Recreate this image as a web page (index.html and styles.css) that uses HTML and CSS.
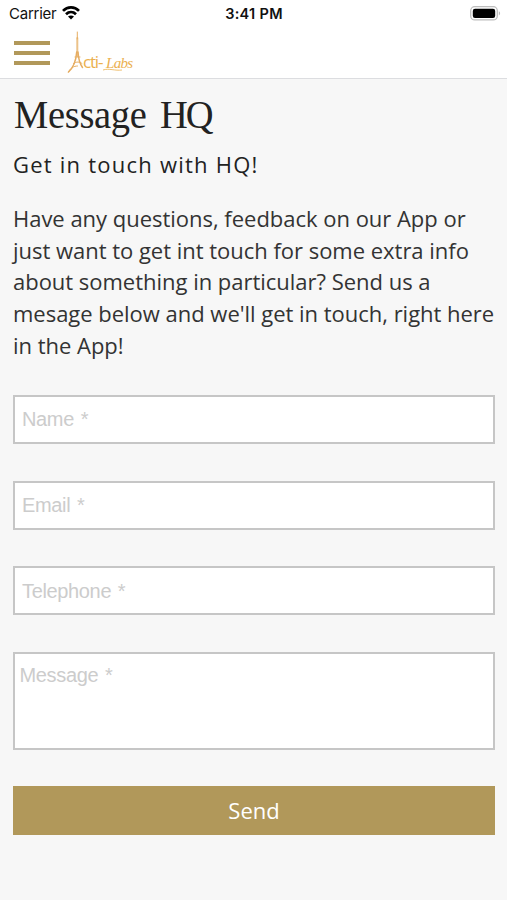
FILE: index.html
```html
<!DOCTYPE html>
<html lang="en">
<head>
<meta charset="utf-8">
<title>Message HQ</title>
<link rel="stylesheet" href="styles.css">
</head>
<body>
<header class="top">
  <div class="status">
    <div class="carrier">Carrier
      <svg class="wifi" width="18" height="14" viewBox="0 0 18 14" fill="none" stroke="#000" stroke-width="2.7">
        <path d="M1 4.9C5.5.3 12.5.3 17 4.9"/>
        <path d="M4 8.2c2.9-2.8 7.1-2.8 10 0"/>
        <path d="M9 13.6 6 10.5c1.7-1.5 4.3-1.5 6 0z" fill="#000" stroke="none"/>
      </svg>
    </div>
    <time class="clock">3:41 PM</time>
    <svg class="battery" width="31" height="15" viewBox="0 0 31 15">
      <rect x=".7" y=".7" width="26.6" height="13.2" rx="4" fill="#fff" stroke="#bdbdbd" stroke-width="1.3"/>
      <rect x="2.8" y="2.7" width="22.4" height="9.2" rx="2.2"/>
      <path d="M28.8 5.2c1.8.7 1.8 3.5 0 4.2z" fill="#bdbdbd"/>
    </svg>
  </div>
  <nav class="bar">
    <button class="menu" aria-label="Menu"><span></span><span></span><span></span></button>
    <svg class="logo" width="72" height="48" viewBox="0 0 72 48" role="img" aria-label="Acti-Labs">
      <g fill="none" stroke="#e6ad62" stroke-linecap="round">
        <path d="M11.300 2v7" stroke-width="1"/>
        <path d="M11.300 8v18" stroke-width="2" stroke-opacity=".75"/>
        <path d="M10.700 22C10 31 7 38 2.500 42M12 22c.5 8 2 12 4.500 15.500" stroke-width="1.5"/>
        <path d="M9 27h5M7.500 33.500c3-2 6-2 8.500 0M2.500 42c2-4 5-6 9-6" stroke-width="1"/>
      </g>
      <text class="logo-caps" x="17" y="37.500">cti-</text>
      <text class="logo-script" x="40" y="38">Labs</text>
      <path d="M37 40c6-2 12 1 19 0" fill="none" stroke="#ebb04e" stroke-width=".8"/>
    </svg>
  </nav>
</header>
<main class="page">
  <h1>Message <span>HQ</span></h1>
  <h2>Get in touch with HQ!</h2>
  <p>Have any questions, feedback on our App or<br>just want to get int touch for some extra info<br>about something in particular? Send us a<br>mesage below and we'll get in touch, right here<br>in the App!</p>
  <form class="form">
    <input type="text" placeholder="Name *" aria-label="Name">
    <input type="email" placeholder="Email *" aria-label="Email">
    <input type="tel" placeholder="Telephone *" aria-label="Telephone">
    <textarea placeholder="Message *" aria-label="Message"></textarea>
    <button class="send" type="button">Send</button>
  </form>
</main>
</body>
</html>
```

FILE: styles.css
```css
* { box-sizing: border-box; }
body {
  margin: 0;
  min-height: 900px;
  background: #f7f7f7;
  color: #333;
  font-family: "Open Sans", sans-serif;
}
.top {
  height: 79px;
  background: #fff;
  border-bottom: 1px solid #dcdde0;
}
.status {
  display: grid;
  grid-template-columns: 1fr auto 1fr;
  align-items: center;
  height: 27px;
  padding: 0 6px 0 9px;
  font: 15px/27px Inter, sans-serif;
  color: #111;
}
.carrier { display: flex; align-items: center; gap: 6px; letter-spacing: -.25px; }
.wifi { margin-top: -2px; }
.clock { font-weight: 600; font-size: 14.5px; letter-spacing: .3px; margin-right: 2px; }
.battery { justify-self: end; }
.bar { display: flex; align-items: flex-start; padding-left: 14px; }
.menu {
  display: flex;
  flex-direction: column;
  gap: 6px;
  width: 36px;
  margin: 14px 0 0;
  padding: 0;
  border: 0;
  background: none;
}
.menu span { height: 4px; width: 36px; background: #b1985a; }
.logo { margin: 3px 0 0 16px; overflow: visible; }
.logo text { fill: #ebb04e; }
.logo-caps { font: 17px "Open Sans", sans-serif; letter-spacing: -1.2px; }
.logo-script { font: italic 15px "Liberation Serif", serif; letter-spacing: -.7px; }
.page { padding: 13px 12px 0 13px; }
h1 {
  margin: -1px 0 0;
  padding-left: 1px;
  font: 38.5px/46px "Liberation Serif", serif;
  letter-spacing: -.3px;
  word-spacing: 4px;
  color: #222;
  transform: scaleY(1.05);
}
h1 span { letter-spacing: -2px; }
h2 {
  margin: 12px 0 0;
  font-size: 22px;
  line-height: 31px;
  font-weight: 500;
  letter-spacing: 1.23px;
  color: #222;
}
p {
  margin: 23px 0 0;
  font-size: 22px;
  line-height: 31.7px;
  letter-spacing: -.02px;
  white-space: nowrap;
}
.form {
  display: flex;
  flex-direction: column;
  gap: 36.7px;
  margin-top: 33.4px;
}
input, textarea {
  display: block;
  width: 100%;
  height: 49px;
  margin: 0;
  padding: 1px 7px 0;
  border: 2px solid #c6c6c6;
  border-radius: 0;
  background: #fff;
  font: 20px/24px "Liberation Sans", sans-serif;
  letter-spacing: -.35px;
}
textarea { height: 98px; padding: 9px 4.5px; resize: none; }
::placeholder { color: #ccc; opacity: 1; word-spacing: 1.5px; }
.send {
  height: 49px;
  margin-top: -.7px;
  padding: 0;
  border: 0;
  background: #b1985a;
  color: #fff;
  font: 22px/48px "Open Sans", sans-serif;
}
```
